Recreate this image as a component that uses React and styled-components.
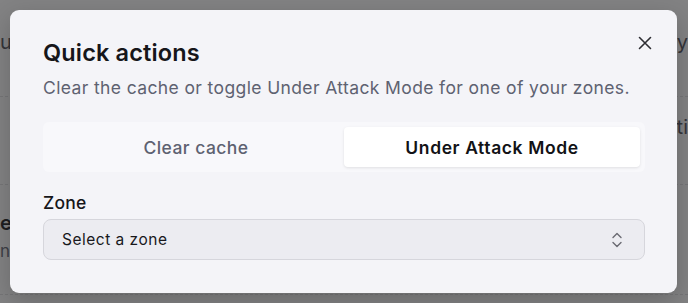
import React from "react";
import styled, { createGlobalStyle } from "styled-components";

const Global = createGlobalStyle`
  html, body { margin: 0; padding: 0; }
  body { font-family: Inter, "Noto Sans", sans-serif; width: 688px; height: 303px; overflow: hidden; }
`;

const Page = styled.div`
  position: relative;
  width: 688px;
  height: 303px;
  background: #f6f6f8;
  overflow: hidden;
`;

const BgSection = styled.div`
  height: ${(p) => p.$h}px;
  border-bottom: 1px dashed #d9d9de;
  padding: ${(p) => p.$pad};
  font-size: 20px;
  color: #4a4a55;
  box-sizing: border-box;
  display: flex;
  justify-content: space-between;
`;

const BgStack = styled.div`
  display: flex;
  flex-direction: column;
  gap: 6px;
`;

const BgHeading = styled.span`
  font-weight: 600;
  color: #1a1a20;
`;

const BgSub = styled.span`
  font-size: 17px;
  color: #5e6271;
`;

const Overlay = styled.div`
  position: absolute;
  inset: 0;
  background: rgba(34, 34, 34, 0.55);
  display: flex;
  align-items: flex-start;
  justify-content: flex-start;
  padding: 10px 0 0 10px;
`;

const Dialog = styled.div`
  position: relative;
  width: 667px;
  height: 283px;
  box-sizing: border-box;
  background: #f4f4f8;
  border-radius: 9px;
  padding: 28px 32px 0 33px;
  box-shadow: 0 8px 24px rgba(0, 0, 0, 0.2);
`;

const Title = styled.h2`
  margin: 0;
  font-size: 23.5px;
  font-weight: 600;
  color: #16161a;
  line-height: 30px;
  letter-spacing: 0.15px;
`;

const Desc = styled.p`
  margin: 9px 0 0;
  font-size: 17.5px;
  line-height: 22px;
  color: #5e6271;
  letter-spacing: 0.38px;
  white-space: nowrap;
`;

const Close = styled.button`
  position: absolute;
  top: 21px;
  right: 20px;
  width: 24px;
  height: 24px;
  border: none;
  background: transparent;
  padding: 0;
  display: flex;
  align-items: center;
  justify-content: center;
  color: #2d2d33;
`;

const Tabs = styled.div`
  margin-top: 23px;
  display: grid;
  grid-template-columns: 1fr 1fr;
  padding: 5px;
  background: #f8f8fb;
  border-radius: 6px;
  height: 50px;
  box-sizing: border-box;
`;

const Tab = styled.div`
  display: flex;
  align-items: center;
  justify-content: center;
  font-size: 17.5px;
  font-weight: ${(p) => (p.$active ? 600 : 500)};
  color: ${(p) => (p.$active ? "#121216" : "#5e6271")};
  background: ${(p) => (p.$active ? "#ffffff" : "transparent")};
  border-radius: 4px;
  box-shadow: ${(p) => (p.$active ? "0 1px 3px rgba(0,0,0,0.1)" : "none")};
  letter-spacing: ${(p) => (p.$active ? "0.6px" : "0.45px")};
`;

const Label = styled.div`
  margin-top: 21px;
  font-size: 17.5px;
  font-weight: 500;
  color: #16161a;
  line-height: 20px;
  letter-spacing: 0.2px;
`;

const Select = styled.div`
  margin-top: 6px;
  height: 41px;
  box-sizing: border-box;
  border: 1px solid #d6d6dc;
  border-radius: 8px;
  background: #ececf1;
  display: flex;
  align-items: center;
  justify-content: space-between;
  padding: 0 21px 0 18px;
  font-size: 15.5px;
  color: #18181c;
  letter-spacing: 0.5px;
`;

export default function App() {
  return (
    <>
      <Global />
      <Page>
        <BgSection $h={97} $pad="30px 0 0 0">
          <span>us</span>
          <span>y</span>
        </BgSection>
        <BgSection $h={88} $pad="18px 0 0 0">
          <span></span>
          <span>ti</span>
        </BgSection>
        <BgSection $h={110} $pad="26px 0 0 0">
          <BgStack>
            <BgHeading>ev</BgHeading>
            <BgSub>nc</BgSub>
          </BgStack>
          <span></span>
        </BgSection>
        <Overlay>
          <Dialog>
            <Close aria-label="Close">
              <svg width="14" height="14" viewBox="0 0 14 14" fill="none">
                <path d="M1.5 1.5 L12.5 12.5 M12.5 1.5 L1.5 12.5" stroke="currentColor" strokeWidth="1.6" strokeLinecap="round" />
              </svg>
            </Close>
            <Title>Quick actions</Title>
            <Desc>Clear the cache or toggle Under Attack Mode for one of your zones.</Desc>
            <Tabs>
              <Tab>Clear cache</Tab>
              <Tab $active>Under Attack Mode</Tab>
            </Tabs>
            <Label>Zone</Label>
            <Select>
              <span>Select a zone</span>
              <svg width="12" height="18" viewBox="0 0 12 18" fill="none">
                <path d="M2 6.5 L6 2.5 L10 6.5 M2 11.5 L6 15.5 L10 11.5" stroke="#6a6a72" strokeWidth="1.4" strokeLinecap="round" strokeLinejoin="round" />
              </svg>
            </Select>
          </Dialog>
        </Overlay>
      </Page>
    </>
  );
}
